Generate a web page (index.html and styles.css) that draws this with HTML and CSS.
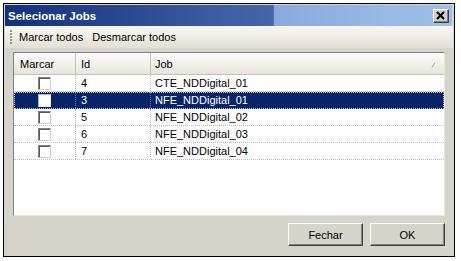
FILE: index.html
```html
<!DOCTYPE html>
<html>
<head>
<meta charset="utf-8">
<link rel="stylesheet" href="styles.css">
</head>
<body>
<div class="dialog">
  <div class="titlebar">
    <span class="title">Selecionar Jobs</span>
    <span class="close"><svg width="10" height="9" viewBox="0 0 10 9"><path d="M1 1 L8 8 M8 1 L1 8" stroke="#000" stroke-width="2"/></svg></span>
  </div>
  <div class="toolbar">
    <span class="grip"></span>
    <span class="tool">Marcar todos</span>
    <span class="tool">Desmarcar todos</span>
  </div>
  <div class="grid">
    <div class="row head">
      <div class="cell">Marcar</div>
      <div class="cell">Id</div>
      <div class="cell jobhead">Job<svg class="sort" width="5" height="6" viewBox="0 0 5 6"><path d="M1 5.5 L4 0.5" stroke="#a0a0a0" stroke-width="1"/></svg></div>
    </div>
    <div class="row">
      <div class="cell chk"><span class="box"></span></div>
      <div class="cell">4</div>
      <div class="cell">CTE_NDDigital_01</div>
    </div>
    <div class="row sel">
      <div class="cell chk"><span class="box"></span></div>
      <div class="cell">3</div>
      <div class="cell">NFE_NDDigital_01</div>
    </div>
    <div class="row">
      <div class="cell chk"><span class="box"></span></div>
      <div class="cell">5</div>
      <div class="cell">NFE_NDDigital_02</div>
    </div>
    <div class="row">
      <div class="cell chk"><span class="box"></span></div>
      <div class="cell">6</div>
      <div class="cell">NFE_NDDigital_03</div>
    </div>
    <div class="row">
      <div class="cell chk"><span class="box"></span></div>
      <div class="cell">7</div>
      <div class="cell">NFE_NDDigital_04</div>
    </div>
  </div>
  <div class="buttons">
    <span class="btn">Fechar</span>
    <span class="btn">OK</span>
  </div>
</div>
</body>
</html>
```
FILE: styles.css
```css
html, body {
  margin: 0;
  padding: 0;
  background: #ffffff;
}
body {
  padding: 3px 0 0 3px;
  font-family: "Liberation Sans", Arial, sans-serif;
  font-size: 11px;
  color: #000;
}
.dialog {
  width: 448px;
  height: 250px;
  border: 1px solid #000;
  background: #d6d3cb;
  padding: 1px;
  box-sizing: content-box;
  display: flex;
  flex-direction: column;
}
.dialog > * { flex: none; }
.titlebar {
  height: 21px;
  margin: 0 1px 0 0;
  display: flex;
  align-items: center;
  justify-content: space-between;
  padding: 0 3px 0 3px;
  background: linear-gradient(90deg, #14307a 0%, #3a5aa2 45%, #4666aa 60%, #8aaade 60.3%, #a0c0ea 100%);
}
.title {
  color: #fff;
  font-weight: bold;
  font-size: 11.5px;
  padding-top: 1px;
}
.close {
  width: 14px;
  height: 12px;
  background: #d4d0c8;
  border: 1px solid;
  border-color: #fff #404040 #404040 #fff;
  box-shadow: inset -1px -1px 0 #808080;
  display: flex;
  align-items: center;
  justify-content: center;
}
.toolbar {
  height: 22px;
  display: flex;
  align-items: center;
  gap: 9px;
  padding-left: 5px;
  background: linear-gradient(180deg, #f7f6f2 0%, #eeece6 50%, #e2dfd7 100%);
  border-bottom: 1px solid #d8d5cd;
}
.grip {
  width: 2px;
  height: 14px;
  margin-right: -2px;
  background: repeating-linear-gradient(180deg, #9a9890 0 2px, transparent 2px 3px);
}
.tool { color: #000; }
.grid {
  margin: 3px 8px 0 8px;
  height: 162px;
  background: #fff;
  border: 1px solid;
  border-color: #808080 #e8e6e0 #e8e6e0 #808080;
}
.row {
  display: grid;
  grid-template-columns: 62px 75px 1fr;
  height: 17px;
  border-bottom: 1px dotted #bcbcbc;
  box-sizing: border-box;
}
.cell {
  display: flex;
  align-items: center;
  padding-left: 5px;
  border-right: 1px dotted #bcbcbc;
  white-space: nowrap;
}
.cell:last-child { border-right: none; padding-left: 4px; }
.row.head {
  height: 22px;
  border-bottom: 1px solid #c4c1b8;
  background: linear-gradient(180deg, #fbfbf9 0%, #f1efe9 60%, #e6e3dc 100%);
}
.row.head .cell {
  border-right: 1px solid #c4c1b8;
  padding-top: 1px;
}
.row.head .cell:first-child { padding-left: 6px; }
.row.head .cell:last-child { border-right: none; }
.jobhead {
  justify-content: space-between;
  padding-right: 8px;
}
.sort { margin-top: 1px; }
.chk {
  justify-content: center;
  padding-left: 0;
}
.box {
  width: 11px;
  height: 11px;
  background: #fff;
  border: 1px solid;
  border-color: #808080 #d4d0c8 #d4d0c8 #808080;
  box-shadow: inset 1px 1px 0 #5a5a5a;
}
.row.sel {
  background: #0a246a;
  color: #fff;
  outline: 1px dotted #c8c8c8;
  outline-offset: -1px;
}
.row.sel .cell { border-right-color: #6070a0; }
.row.sel .box {
  border-color: #b0b0b0 #e8e8e8 #e8e8e8 #b0b0b0;
  box-shadow: none;
}
.buttons {
  display: flex;
  justify-content: flex-end;
  gap: 7px;
  margin: 7px 8px 0 0;
}
.btn {
  width: 73px;
  height: 21px;
  display: flex;
  align-items: center;
  justify-content: center;
  background: #d6d3cb;
  border: 1px solid;
  border-color: #fff #404040 #404040 #fff;
  box-shadow: inset -1px -1px 0 #808080;
  font-size: 11px;
}
```
